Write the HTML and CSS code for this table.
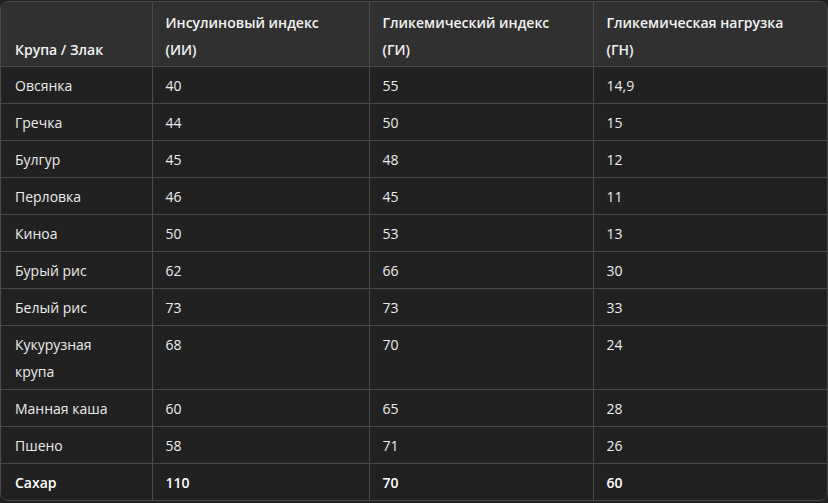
FILE: index.html
```html
<!DOCTYPE html>
<html lang="ru">
<head>
<meta charset="utf-8">
<link rel="stylesheet" href="styles.css">
</head>
<body>
<div class="wrap">
<table class="grid">
<colgroup>
<col class="c1"><col class="c2"><col class="c3"><col class="c4">
</colgroup>
<thead>
<tr><th>Крупа / Злак</th><th>Инсулиновый индекс<br>(ИИ)</th><th>Гликемический индекс<br>(ГИ)</th><th>Гликемическая нагрузка<br>(ГН)</th></tr>
</thead>
<tbody>
<tr><td>Овсянка</td><td>40</td><td>55</td><td>14,9</td></tr>
<tr><td>Гречка</td><td>44</td><td>50</td><td>15</td></tr>
<tr><td>Булгур</td><td>45</td><td>48</td><td>12</td></tr>
<tr><td>Перловка</td><td>46</td><td>45</td><td>11</td></tr>
<tr><td>Киноа</td><td>50</td><td>53</td><td>13</td></tr>
<tr><td>Бурый рис</td><td>62</td><td>66</td><td>30</td></tr>
<tr><td>Белый рис</td><td>73</td><td>73</td><td>33</td></tr>
<tr><td>Кукурузная<br>крупа</td><td>68</td><td>70</td><td>24</td></tr>
<tr><td>Манная каша</td><td>60</td><td>65</td><td>28</td></tr>
<tr><td>Пшено</td><td>58</td><td>71</td><td>26</td></tr>
<tr class="total"><td>Сахар</td><td>110</td><td>70</td><td>60</td></tr>
</tbody>
</table>
</div>
</body>
</html>
```
FILE: styles.css
```css
html, body {
  margin: 0;
  padding: 0;
  background: #212121;
}
body {
  padding-top: 1px;
  font-family: "Open Sans", "Noto Sans", sans-serif;
  font-size: 14px;
  color: #ececec;
}
.wrap {
  width: 826px;
  border: 1px solid #4a4a4a;
  border-radius: 8px;
  overflow: hidden;
}
.grid {
  width: 100%;
  border-collapse: collapse;
  table-layout: fixed;
}
.c1 { width: 151px; }
.c2 { width: 217px; }
.c3 { width: 224px; }
.c4 { width: auto; }
th, td {
  text-align: left;
  vertical-align: top;
  line-height: 27px;
  padding: 5px 13px 4px;
  border-left: 1px solid #4a4a4a;
  border-top: 1px solid #4a4a4a;
}
th:first-child, td:first-child {
  border-left: none;
  padding-left: 14px;
}
thead th {
  border-top: none;
  background: #303030;
  color: #f2f2f2;
  font-weight: 600;
  vertical-align: bottom;
  padding-top: 7px;
  padding-bottom: 3px;
}
td { background: #212121; }
.total td { font-weight: 600; color: #fff; }
```
